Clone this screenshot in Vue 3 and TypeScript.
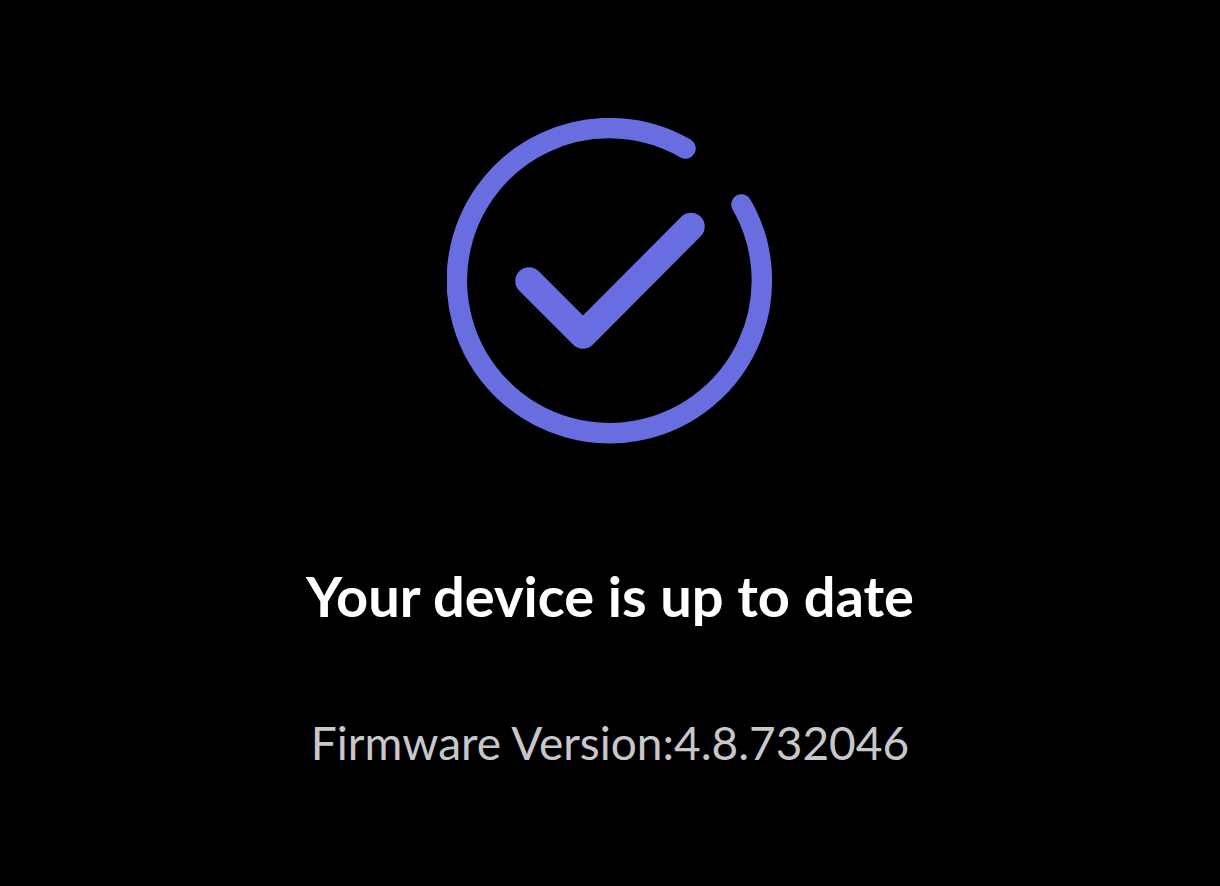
<script setup lang="ts">
const firmwareVersion: string = '4.8.732046'
</script>

<template>
  <main class="update-status">
    <svg class="status-icon" viewBox="0 0 326 326" aria-hidden="true">
      <path d="M238.5 30.5A152.5 152.5 0 1 0 294.5 86.5" stroke-width="20.5" />
      <path d="M82 163L136 217L244 108.5" stroke-width="27.5" />
    </svg>
    <h1 class="title">Your device is up to date</h1>
    <p class="version">Firmware Version:{{ firmwareVersion }}</p>
  </main>
</template>

<style>
body {
  margin: 0;
  background: #000;
}
</style>

<style scoped>
.update-status {
  box-sizing: border-box;
  min-height: 100vh;
  display: flex;
  flex-direction: column;
  align-items: center;
  padding: 118px 24px 48px;
  background: #000;
  font-family: Lato, "Open Sans", sans-serif;
  text-align: center;
}
.status-icon {
  width: 326px;
  max-width: 100%;
  fill: none;
  stroke: #686ee0;
  stroke-linecap: round;
  stroke-linejoin: round;
}
.title {
  margin: 120px 0 0;
  color: #fff;
  font-size: 56px;
  line-height: 64px;
  font-weight: 700;
}
.version {
  margin: 87px 0 0;
  color: #c8c7cb;
  font-size: 46px;
  line-height: 56px;
  font-weight: 400;
}
</style>
